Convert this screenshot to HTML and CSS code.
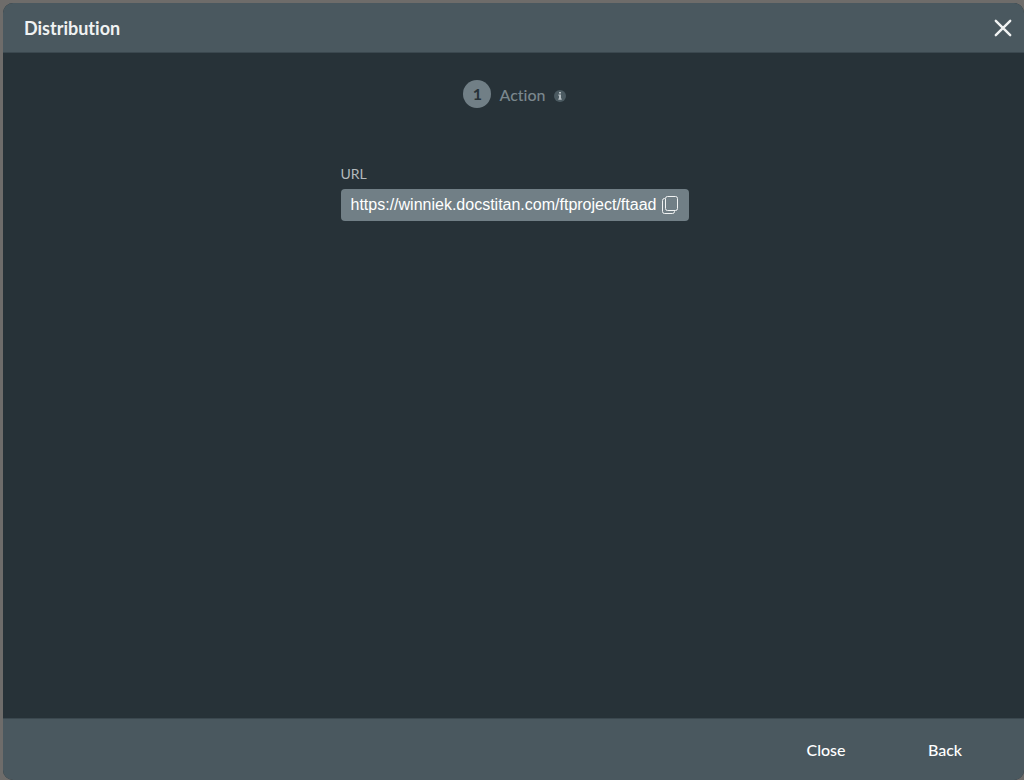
FILE: index.html
```html
<!DOCTYPE html>
<html lang="en">
<head>
    <meta charset="UTF-8">
    <meta name="viewport" content="width=device-width, initial-scale=1.0">
    <title>Distribution</title>
    <link rel="stylesheet" href="styles.css">
</head>
<body>
    <div class="modal" role="dialog" aria-labelledby="modal-title">
        <header class="modal-header">
            <h1 id="modal-title">Distribution</h1>
            <button type="button" class="icon-btn" aria-label="Close dialog">
                <svg width="18" height="18" viewBox="0 0 18 18" fill="none" stroke="currentColor" stroke-width="2.4" stroke-linecap="round">
                    <path d="M1.8 1.8l14.4 14.4M16.2 1.8L1.8 16.2"/>
                </svg>
            </button>
        </header>

        <main class="modal-body">
            <!-- Current step -->
            <div class="step">
                <span class="step-number">1</span>
                <span class="step-label">Action</span>
                <svg class="info" width="12" height="12" viewBox="0 0 12 12">
                    <circle cx="6" cy="6" r="6" fill="#4b5a61"/>
                    <path d="M5 2h2v1.6H5zM4.4 4.6H7v4h.7v1.2H4.3V8.6H5V5.7h-.6z" fill="#b3bcc0"/>
                </svg>
            </div>

            <!-- Link to share -->
            <div class="form-group">
                <label for="url">URL</label>
                <div class="url-box">
                    <input type="text" id="url" value="https://winniek.docstitan.com/ftproject/ftaad" readonly>
                    <button type="button" class="icon-btn" aria-label="Copy URL">
                        <svg width="16" height="18" viewBox="0 0 16 18" fill="none" stroke="currentColor">
                            <rect x="3.5" y=".5" width="12" height="14" rx="2"/>
                            <path d="M3 2.5h-.5a2 2 0 0 0-2 2v11a2 2 0 0 0 2 2h8a2 2 0 0 0 2-2v-.5"/>
                        </svg>
                    </button>
                </div>
            </div>
        </main>

        <footer class="modal-footer">
            <button type="button" class="btn">Close</button>
            <button type="button" class="btn">Back</button>
        </footer>
    </div>
</body>
</html>
```

FILE: styles.css
```css
* {
    margin: 0;
    padding: 0;
    box-sizing: border-box;
}

body {
    font-family: Lato, sans-serif;
    font-variant-ligatures: none;
    background-color: #6e6c6a;
    color: #f0f2f2;
    min-height: 100vh;
    display: flex;
    padding: 3px 0 0 3px;
}

.modal {
    flex: 1;
    display: flex;
    flex-direction: column;
    background-color: #273238;
    border-radius: 10px;
    overflow: hidden;
}

.modal-header {
    display: flex;
    justify-content: space-between;
    align-items: center;
    height: 50px;
    padding: 0 12px 0 21px;
    background-color: #4a585f;
    border-bottom: 1px solid #3b484f;
}

h1 {
    font-size: 18px;
    font-weight: 700;
}

button {
    background: none;
    border: none;
    color: inherit;
    font-family: inherit;
    cursor: pointer;
}

.icon-btn {
    display: flex;
}

.modal-body {
    flex: 1;
    display: flex;
    flex-direction: column;
    align-items: center;
    gap: 57px;
    padding: 27px 18px 27px 20px;
}

.step {
    display: flex;
    align-items: center;
    gap: 8px;
    color: #7a878d;
}

.step-number {
    width: 28px;
    height: 28px;
    border-radius: 50%;
    background-color: #717f86;
    color: #273238;
    font-size: 16px;
    font-weight: 700;
    line-height: 28px;
    text-align: center;
}

.step-label {
    font-size: 16px;
    font-weight: 500;
}

.info {
    margin-top: 4px;
}

.form-group {
    width: 348px;
    max-width: 100%;
}

label {
    display: block;
    margin-bottom: 6px;
    color: #b4babd;
    font-size: 14px;
    line-height: 18px;
}

.url-box {
    display: flex;
    align-items: center;
    gap: 6px;
    height: 32px;
    padding: 0 11px 0 10px;
    background-color: #717f86;
    border-radius: 4px;
}

.url-box input {
    flex: 1;
    min-width: 0;
    background: none;
    border: none;
    outline: none;
    color: #ffffff;
    font-family: "Liberation Sans", Arial, sans-serif;
    font-size: 16px;
}

.modal-footer {
    display: flex;
    justify-content: flex-end;
    align-items: center;
    gap: 39px;
    height: 62px;
    padding: 0 39px;
    background-color: #4a585f;
    border-top: 1px solid #3b484f;
}

.btn {
    width: 80px;
    height: 36px;
    color: #ffffff;
    font-size: 16px;
    font-weight: 500;
}
```
